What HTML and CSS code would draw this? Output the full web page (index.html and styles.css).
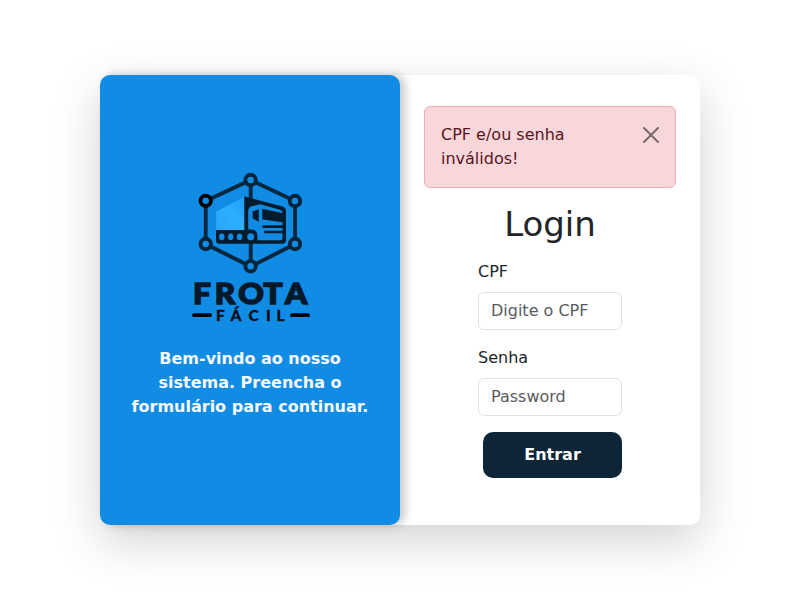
FILE: index.html
```html
<!DOCTYPE html>
<html lang="pt-BR">
<head>
<meta charset="utf-8">
<title>Frota Fácil - Login</title>
<link rel="stylesheet" href="styles.css">
</head>
<body>
<main class="card">
  <section class="welcome">
    <svg class="logo" viewBox="190 165 120 160" role="img" aria-label="Frota Fácil">
      <defs>
        <linearGradient id="cargo" x1="0" y1="1" x2="1" y2="0">
          <stop offset="0" stop-color="#2ba4f6"/>
          <stop offset=".55" stop-color="#2cb0ff"/>
          <stop offset="1" stop-color="#1e9df4"/>
        </linearGradient>
      </defs>
      <g class="frame">
        <path d="M250.7 180 295 201V244L250.7 266.5 205.7 244V201Z"/>
        <path d="M250.7 180V199M250.7 240V266"/>
        <circle cx="250.6" cy="180" r="5.2"/>
        <circle cx="295" cy="201" r="5.2"/>
        <circle cx="295" cy="244" r="5.2"/>
        <circle cx="250.6" cy="266.3" r="5.2"/>
        <circle cx="205.7" cy="244" r="5.2"/>
        <circle class="node-dark" cx="205.7" cy="200.8" r="5.2"/>
      </g>
      <path class="ink" d="M244 196.3 282.5 206.5Q286 207.5 286 211V240Q286 243.7 282.5 243.7H219.5Q216 243.7 216 240.5V230H244Z"/>
      <path fill="url(#cargo)" d="M216.2 211.7 244.3 196.8V230H216.2Z"/>
      <path class="cut" d="M248.2 211Q248.4 207.5 251.5 206.2L260 204.3 280 209.7Q282.5 210.4 282.5 213V238Q282.5 240.2 280.2 240.2H257.4V235.5Q257 229.8 251.5 229.5H248.2Z"/>
      <path class="ink" d="M252.6 211.5 258.8 209.2V221.8L252.6 218.5ZM262.3 208.8 283 213.2V222.3L262.3 219.5Z"/>
      <path class="ink" d="M262.5 225.3H283V228H262.5ZM264 230.8H283V233.3H264Z"/>
      <g class="cut">
        <ellipse cx="221.8" cy="236.8" rx="2.7" ry="3.4"/>
        <ellipse cx="230.7" cy="236.8" rx="2.7" ry="3.4"/>
        <ellipse cx="239.5" cy="236.8" rx="2.7" ry="3.4"/>
        <circle cx="250.7" cy="236.7" r="3.5"/>
      </g>
      <text class="brand" transform="translate(190 303.6) scale(1.09 1)" y="0" x="2.7 22.8 44.2 67.5 87.2">FROTA</text>
      <text class="sub" y="321.4" x="216 230.6 248.4 266 276.5">FÁCIL</text>
      <path class="dash" d="M194 315.2H210M292 315.2H308"/>
    </svg>
    <p class="message">Bem-vindo ao nosso sistema. Preencha o formulário para continuar.</p>
  </section>
  <section class="login">
    <div class="alert" role="alert">
      <span>CPF e/ou senha inválidos!</span>
      <button class="close" type="button" aria-label="Fechar">
        <svg viewBox="0 0 16 16" width="16" height="16"><path d="M.293.293a1 1 0 0 1 1.414 0L8 6.586 14.293.293a1 1 0 1 1 1.414 1.414L9.414 8l6.293 6.293a1 1 0 0 1-1.414 1.414L8 9.414l-6.293 6.293a1 1 0 0 1-1.414-1.414L6.586 8 .293 1.707a1 1 0 0 1 0-1.414z"/></svg>
      </button>
    </div>
    <h1>Login</h1>
    <form class="form">
      <label for="cpf">CPF</label>
      <input id="cpf" type="text" placeholder="Digite o CPF">
      <label for="senha">Senha</label>
      <input id="senha" type="password" placeholder="Password">
      <button class="submit" type="button">Entrar</button>
    </form>
  </section>
</main>
</body>
</html>
```

FILE: styles.css
```css
* { box-sizing: border-box; }

body {
  margin: 0;
  height: 600px;
  display: flex;
  align-items: center;
  justify-content: center;
  background: #fff;
  color: #212529;
  font: 16px/24px "DejaVu Sans", sans-serif;
}

.card {
  display: flex;
  width: 600px;
  height: 450px;
  border-radius: 10px;
  background: #fff;
  box-shadow: 0 16px 48px rgba(0, 0, 0, .175);
}

.welcome {
  display: flex;
  flex-direction: column;
  align-items: center;
  width: 300px;
  padding: 90px 24px 0;
  border-radius: 10px;
  background: #118ce4;
  box-shadow: 5px 0 10px rgba(0, 0, 0, .22);
}

.logo { display: block; width: 120px; height: 160px; }
.frame { fill: none; stroke: #04283f; stroke-width: 3.9; }
.frame circle { fill: #118ce4; stroke: #03243a; }
.frame .node-dark { stroke: #000; }
.ink { fill: #031c2d; }
.cut { fill: #118ce4; }
.brand { font: 900 29px Lato, sans-serif; fill: #04192a; stroke: #04192a; stroke-width: 1.5; }
.sub { font: 900 15.5px Lato, sans-serif; fill: #020d17; stroke: #020d17; stroke-width: .3; }
.dash { stroke: #000; stroke-width: 3.8; stroke-linecap: round; }

.message {
  margin: 22px 0 0;
  color: #f8f9fa;
  font-weight: 700;
  text-align: center;
}

.login {
  display: flex;
  flex-direction: column;
  align-items: center;
  width: 300px;
  padding: 31px 24px 0;
}

.alert {
  display: flex;
  align-items: flex-start;
  justify-content: space-between;
  width: 252px;
  height: 82px;
  padding: 16px;
  border: 1px solid #f1aeb5;
  border-radius: 6px;
  background: #f8d7da;
  color: #58151c;
}

.alert span { width: 154px; }

.close {
  display: flex;
  margin-top: 4px;
  padding: 0;
  border: 0;
  background: none;
  opacity: .5;
}

h1 {
  margin: 16px 0 0;
  font-size: 34px;
  font-weight: 400;
  line-height: 41px;
}

.form {
  display: flex;
  flex-direction: column;
  width: 144px;
  margin-top: 15px;
}

label { margin-bottom: 8px; }

input {
  width: 100%;
  height: 38px;
  margin: 0 0 16px;
  padding: 5px 12px 7px;
  border: 1px solid #dee2e6;
  border-radius: 6px;
  background: #fff;
  font: inherit;
}

input::placeholder { color: #595c5f; opacity: 1; }

.submit {
  align-self: flex-end;
  width: 139px;
  height: 46px;
  padding: 0;
  border: 0;
  border-radius: 10px;
  background: #0e2538;
  color: #fff;
  font: inherit;
  font-weight: 700;
}
```
